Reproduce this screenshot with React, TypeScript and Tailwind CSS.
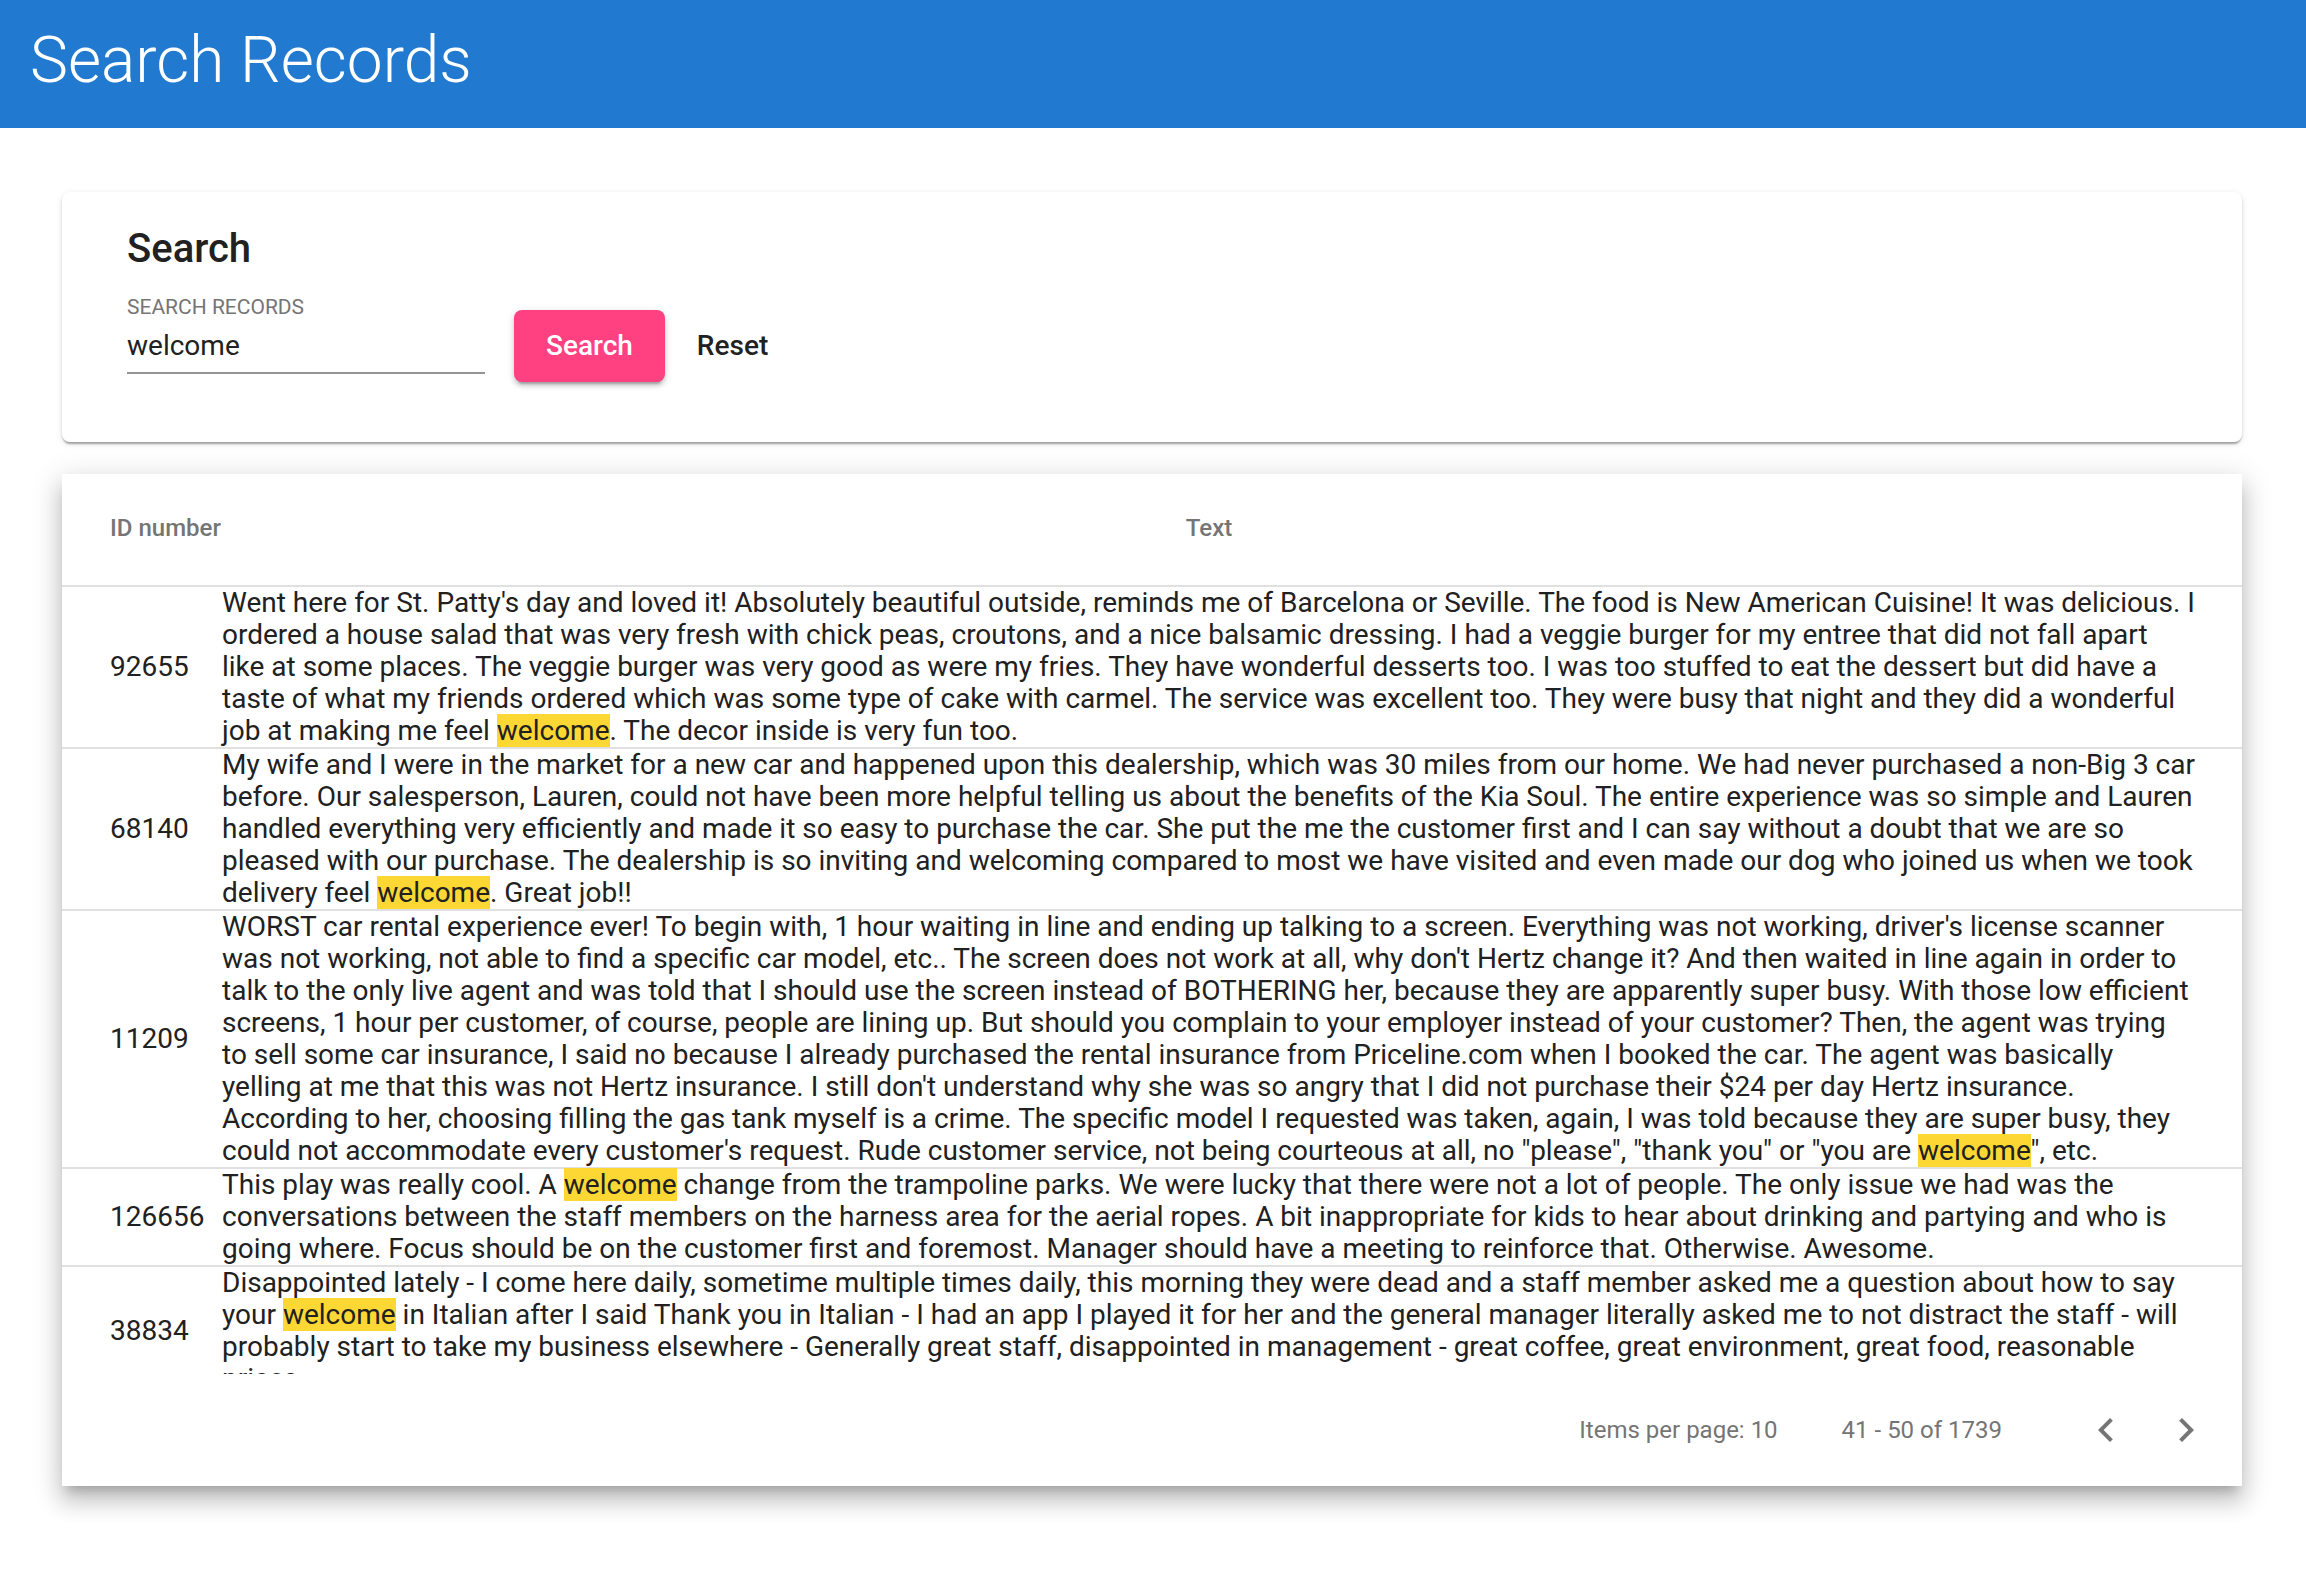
import React from "react";

type Row = { id: string; parts: string[] };

// odd indexes in parts are the highlighted search hits
const rows: Row[] = [
  {
    id: "92655",
    parts: [
      "Went here for St. Patty's day and loved it! Absolutely beautiful outside, reminds me of Barcelona or Seville. The food is New American Cuisine! It was delicious. I ordered a house salad that was very fresh with chick peas, croutons, and a nice balsamic dressing. I had a veggie burger for my entree that did not fall apart like at some places. The veggie burger was very good as were my fries. They have wonderful desserts too. I was too stuffed to eat the dessert but did have a taste of what my friends ordered which was some type of cake with carmel. The service was excellent too. They were busy that night and they did a wonderful job at making me feel ",
      "welcome",
      ". The decor inside is very fun too.",
    ],
  },
  {
    id: "68140",
    parts: [
      "My wife and I were in the market for a new car and happened upon this dealership, which was 30 miles from our home. We had never purchased a non-Big 3 car before. Our salesperson, Lauren, could not have been more helpful telling us about the benefits of the Kia Soul. The entire experience was so simple and Lauren handled everything very efficiently and made it so easy to purchase the car. She put the me the customer first and I can say without a doubt that we are so pleased with our purchase. The dealership is so inviting and welcoming compared to most we have visited and even made our dog who joined us when we took delivery feel ",
      "welcome",
      ". Great job!!",
    ],
  },
  {
    id: "11209",
    parts: [
      "WORST car rental experience ever! To begin with, 1 hour waiting in line and ending up talking to a screen. Everything was not working, driver's license scanner was not working, not able to find a specific car model, etc.. The screen does not work at all, why don't Hertz change it? And then waited in line again in order to talk to the only live agent and was told that I should use the screen instead of BOTHERING her, because they are apparently super busy. With those low efficient screens, 1 hour per customer, of course, people are lining up. But should you complain to your employer instead of your customer? Then, the agent was trying to sell some car insurance, I said no because I already purchased the rental insurance from Priceline.com when I booked the car. The agent was basically yelling at me that this was not Hertz insurance. I still don't understand why she was so angry that I did not purchase their $24 per day Hertz insurance. According to her, choosing filling the gas tank myself is a crime. The specific model I requested was taken, again, I was told because they are super busy, they could not accommodate every customer's request. Rude customer service, not being courteous at all, no \"please\", \"thank you\" or \"you are ",
      "welcome",
      "\", etc.",
    ],
  },
  {
    id: "126656",
    parts: [
      "This play was really cool. A ",
      "welcome",
      " change from the trampoline parks. We were lucky that there were not a lot of people. The only issue we had was the conversations between the staff members on the harness area for the aerial ropes. A bit inappropriate for kids to hear about drinking and partying and who is going where. Focus should be on the customer first and foremost. Manager should have a meeting to reinforce that. Otherwise. Awesome.",
    ],
  },
  {
    id: "38834",
    parts: [
      "Disappointed lately - I come here daily, sometime multiple times daily, this morning they were dead and a staff member asked me a question about how to say your ",
      "welcome",
      " in Italian after I said Thank you in Italian - I had an app I played it for her and the general manager literally asked me to not distract the staff - will probably start to take my business elsewhere - Generally great staff, disappointed in management - great coffee, great environment, great food, reasonable prices",
    ],
  },
];

function Chevron({ dir }: { dir: "left" | "right" }) {
  const d =
    dir === "left"
      ? "M15.41 7.41L14 6l-6 6 6 6 1.41-1.41L10.83 12z"
      : "M10 6L8.59 7.41 13.17 12l-4.58 4.59L10 18l6-6z";
  return (
    <button className="flex h-[80px] w-[80px] items-center justify-center">
      <svg width="48" height="48" viewBox="0 0 24 24" fill="#757575">
        <path d={d} />
      </svg>
    </button>
  );
}

export default function App() {
  return (
    <div className="min-h-[1592px] bg-white font-['Roboto',sans-serif] text-[#212121]">
      <header className="h-[128px] bg-[#2179d0] pl-[30px] pt-[23px]">
        <h1 className="text-[64px] font-light leading-[75px] text-white">Search Records</h1>
      </header>

      <main className="pl-[62px] pr-[64px] pt-[64px]">
        <section className="h-[250px] rounded-[8px] bg-white px-[65px] pt-[33px] shadow-[0_4px_2px_-2px_rgba(0,0,0,0.2),0_2px_2px_0_rgba(0,0,0,0.14),0_2px_6px_0_rgba(0,0,0,0.12)]">
          <h2 className="text-[40px] font-medium leading-[48px]">Search</h2>
          <div className="mt-[22px] flex items-start">
            <div className="w-[358px]">
              <div className="text-[21px] leading-[24px] text-[#757575]">SEARCH RECORDS</div>
              <div className="mt-[11px] border-b-2 border-[#949494] pb-[10px] text-[28px] leading-[32px]">welcome</div>
            </div>
            <button className="ml-[29px] mt-[15px] h-[72px] rounded-[8px] bg-[#ff4081] px-[32px] text-[28px] font-medium text-white shadow-[0_6px_2px_-4px_rgba(0,0,0,0.2),0_4px_4px_0_rgba(0,0,0,0.14),0_2px_10px_0_rgba(0,0,0,0.12)]">
              Search
            </button>
            <button className="mt-[15px] h-[72px] px-[32px] text-[28px] font-medium">Reset</button>
          </div>
        </section>

        <section className="mt-[32px] bg-white shadow-[0_10px_10px_-6px_rgba(0,0,0,0.2),0_16px_20px_2px_rgba(0,0,0,0.14),0_6px_28px_4px_rgba(0,0,0,0.12)]">
          <div className="flex h-[113px] items-center border-b-2 border-[#e0e0e0] pb-[3px] text-[24px] font-medium text-[#757575]">
            <div className="w-[160px] shrink-0 pl-[48px]">ID number</div>
            <div className="flex-1 pr-[46px] text-center">Text</div>
          </div>

          <div className="h-[787px] overflow-hidden">
            {rows.map((r) => (
              <div key={r.id} className="flex items-center border-b-2 border-[#e0e0e0] text-[28px] leading-[32px]">
                <div className="w-[160px] shrink-0 pl-[48px]">{r.id}</div>
                <div className="flex-1 pr-[46px]">
                  {r.parts.map((p, i) =>
                    i % 2 === 1 ? (
                      <mark key={i} className="bg-[#fdd835] text-[#212121]">
                        {p}
                      </mark>
                    ) : (
                      <span key={i}>{p}</span>
                    )
                  )}
                </div>
              </div>
            ))}
          </div>

          <div className="flex h-[112px] items-center justify-end pr-[16px] text-[24px] text-[#757575]">
            <span>Items per page: 10</span>
            <span className="mx-[64px]">41 - 50 of 1739</span>
            <Chevron dir="left" />
            <Chevron dir="right" />
          </div>
        </section>
      </main>
    </div>
  );
}
